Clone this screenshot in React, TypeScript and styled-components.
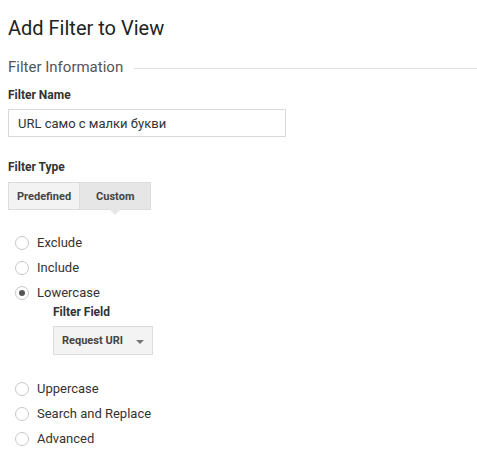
import React from "react";
import styled, { createGlobalStyle } from "styled-components";

const Global = createGlobalStyle`
  html, body { margin: 0; padding: 0; background: #fff; }
  body { font-family: Roboto, "Noto Sans", sans-serif; color: #222; }
`;

const Page = styled.div`
  width: 477px;
  height: 460px;
  padding: 0 0 0 8px;
  box-sizing: border-box;
  overflow: hidden;
`;

const Title = styled.h1`
  margin: 0;
  padding-top: 16px;
  font-size: 20px;
  font-weight: 400;
  line-height: 24px;
  color: #222;
`;

const Section = styled.div`
  display: flex;
  align-items: center;
  gap: 11px;
  margin-top: 18px;
`;

const SectionTitle = styled.span`
  font-size: 15px;
  font-weight: 400;
  color: #555;
  line-height: 18px;
`;

const Rule = styled.div`
  flex: 1;
  height: 1px;
  background: #ddd;
  margin-top: 2px;
`;

const Label = styled.div<{ $top: number }>`
  margin-top: ${(p) => p.$top}px;
  font-size: 12px;
  font-weight: 700;
  color: #333;
  line-height: 14px;
`;

const TextInput = styled.div`
  margin-top: 7px;
  width: 278px;
  height: 28px;
  box-sizing: border-box;
  border: 1px solid #d9d9d9;
  padding: 0 9px;
  display: flex;
  align-items: center;
  font-size: 13px;
  color: #333;
`;

const Toggle = styled.div`
  display: flex;
  margin-top: 8px;
`;

const ToggleButton = styled.div<{ $active?: boolean }>`
  position: relative;
  height: 28px;
  box-sizing: border-box;
  padding: 0 ${(p) => (p.$active ? 16 : 8)}px;
  display: flex;
  align-items: center;
  font-size: 11px;
  font-weight: 700;
  color: #444;
  background: ${(p) => (p.$active ? "#e6e6e6" : "#f3f3f3")};
  border: 1px solid #dcdcdc;
  border-left-width: ${(p) => (p.$active ? 0 : 1)}px;
  ${(p) =>
    p.$active &&
    `
    &::after {
      content: "";
      position: absolute;
      left: 50%;
      bottom: -6px;
      margin-left: -6px;
      border-left: 6px solid transparent;
      border-right: 6px solid transparent;
      border-top: 6px solid #e6e6e6;
    }
  `}
`;

const Options = styled.div`
  margin-top: 20px;
  padding-left: 7px;
  display: flex;
  flex-direction: column;
`;

const Option = styled.div`
  display: flex;
  align-items: center;
  gap: 8px;
  height: 25px;
  font-size: 13px;
  color: #333;
`;

const Radio = styled.span<{ $checked?: boolean }>`
  width: 14px;
  height: 14px;
  box-sizing: border-box;
  border-radius: 50%;
  border: 1px solid #c8c8c8;
  display: flex;
  align-items: center;
  justify-content: center;
  &::after {
    content: "";
    width: 6px;
    height: 6px;
    border-radius: 50%;
    background: ${(p) => (p.$checked ? "#555" : "transparent")};
  }
`;

const SubField = styled.div`
  padding-left: 38px;
  padding-bottom: 21px;
  display: flex;
  flex-direction: column;
`;

const Select = styled.div`
  margin-top: 7px;
  width: 100px;
  height: 29px;
  box-sizing: border-box;
  border: 1px solid #dcdcdc;
  background: #f3f3f3;
  display: flex;
  align-items: center;
  justify-content: space-between;
  padding: 0 8px 0 8px;
  font-size: 11px;
  font-weight: 700;
  color: #444;
`;

const Caret = styled.span`
  width: 0;
  height: 0;
  border-left: 4px solid transparent;
  border-right: 4px solid transparent;
  border-top: 4px solid #777;
  margin-top: 2px;
`;

const types = ["Exclude", "Include", "Lowercase"];
const rest = ["Uppercase", "Search and Replace", "Advanced"];

export default function App() {
  return (
    <>
      <Global />
      <Page>
        <Title>Add Filter to View</Title>
        <Section>
          <SectionTitle>Filter Information</SectionTitle>
          <Rule />
        </Section>
        <Label $top={12}>Filter Name</Label>
        <TextInput>URL само с малки букви</TextInput>
        <Label $top={23}>Filter Type</Label>
        <Toggle>
          <ToggleButton>Predefined</ToggleButton>
          <ToggleButton $active>Custom</ToggleButton>
        </Toggle>
        <Options>
          {types.map((t) => (
            <Option key={t}>
              <Radio $checked={t === "Lowercase"} />
              {t}
            </Option>
          ))}
          <SubField>
            <Label $top={0}>Filter Field</Label>
            <Select>
              Request URI
              <Caret />
            </Select>
          </SubField>
          {rest.map((t) => (
            <Option key={t}>
              <Radio />
              {t}
            </Option>
          ))}
        </Options>
      </Page>
    </>
  );
}
